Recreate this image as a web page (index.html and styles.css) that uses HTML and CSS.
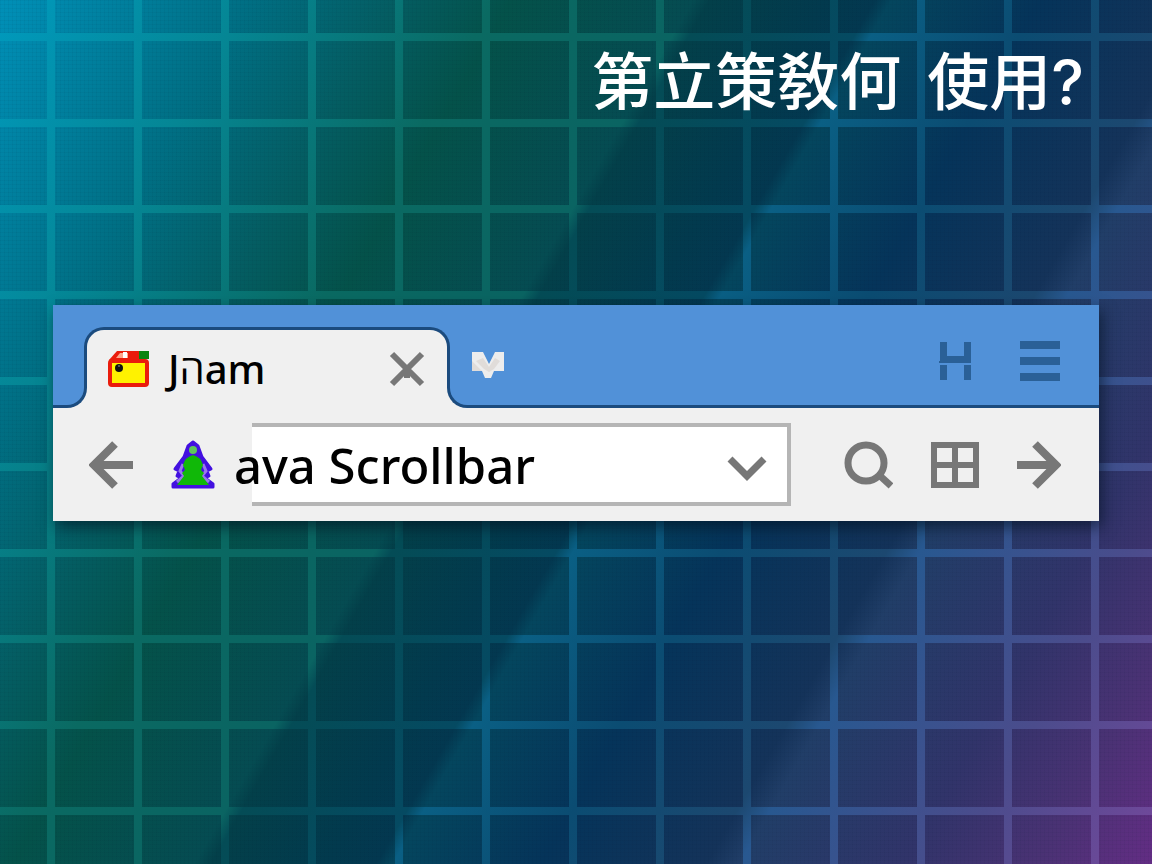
FILE: index.html
```html
<!DOCTYPE html>
<html lang="zh">
<head>
    <meta charset="UTF-8">
    <meta name="viewport" content="width=device-width, initial-scale=1.0">
    <title>Java Scrollbar</title>
    <link rel="stylesheet" href="styles.css">
</head>
<body>
    <h1 class="title"><span>第立策敎何</span> <span>使用?</span></h1>

    <main class="browser">
        <header class="tab-strip">
            <div class="tab">
                <svg class="favicon" width="42" height="38" viewBox="0 0 42 38" aria-hidden="true">
                    <path d="M1 10 9 1H34V11H1z" fill="#ea1c0c"/>
                    <path d="M8 8 12 3H20V8z" fill="#ffa58c"/>
                    <path d="M15 2h4v6h-4z" fill="#fff"/>
                    <path d="M31 1h10v8H31z" fill="#0a8410"/>
                    <rect x="2" y="11" width="37" height="24" rx="2" fill="#fff200" stroke="#ea1c0c" stroke-width="4"/>
                    <circle cx="11" cy="18" r="4" fill="#111"/>
                    <circle cx="11" cy="16" r="1" fill="#667"/>
                </svg>
                <span class="tab-name">Jהam</span>
                <button class="icon-btn close" aria-label="Close tab">
                    <svg width="36" height="36" viewBox="0 0 36 36">
                        <path d="M3 3 33 33M33 3 3 33M18 19v8" fill="none" stroke="#777" stroke-width="6" stroke-linejoin="round"/>
                    </svg>
                </button>
            </div>
            <div class="strip-rest">
                <button class="icon-btn new-tab" aria-label="New tab">
                    <svg width="32" height="28" viewBox="0 0 32 28">
                        <path d="M0 1H11L17 13 23 1H32V20H22L19 27H13L10 20H0z" fill="#ededed"/>
                        <path d="M0 10 10 20H0zM4 10l7-3 6 9 6-9 5 3-6 8-5 3-5-3z" fill="#e0dcd9"/>
                    </svg>
                </button>
                <button class="icon-btn bookmark" aria-label="Bookmarks">
                    <svg width="34" height="38" viewBox="0 0 34 38">
                        <path d="M1 0h7v14h17V0h7v21H0v-2h1zM1 23h7v15H1zM25 23h7v15h-7z" fill="#2a6097"/>
                    </svg>
                </button>
                <button class="icon-btn" aria-label="Menu">
                    <svg width="42" height="40" viewBox="0 0 42 40">
                        <path d="M1 0H41V8H1zM1 16H41V24H1zM1 32H41V40H1z" fill="#2a6097"/>
                    </svg>
                </button>
            </div>
        </header>

        <form class="toolbar">
            <button type="button" class="icon-btn" aria-label="Back">
                <svg width="44" height="48" viewBox="0 0 44 48">
                    <path d="M44 24H5M26 3 5 24 26 45" fill="none" stroke="#777" stroke-width="8"/>
                </svg>
            </button>
            <svg class="site-icon" width="44" height="50" viewBox="0 0 44 50" aria-hidden="true">
                <path d="M22 2 17 6 13 17 4 29 8 31 6 36 10 38 2 44V47H42V44L34 38 38 36 36 31 40 29 31 17 27 6z" fill="#4310e0" stroke="#4310e0" stroke-width="3" stroke-linejoin="round"/>
                <path d="M12 24 9 31 13 36 6 42M32 24 35 31 31 36 38 42" fill="none" stroke="#9a78ec" stroke-width="3"/>
                <path d="M22 15Q14 17 12 25L14 30 11 33 13 36 6 45H38L31 36 33 33 30 30 32 25Q30 17 22 15z" fill="#10b808"/>
                <circle cx="22" cy="10" r="4" fill="#5fc75a"/>
            </svg>
            <div class="address">
                <input type="text" value="ava Scrollbar" aria-label="Address">
                <button type="button" class="icon-btn history" aria-label="Show history">
                    <svg width="40" height="26" viewBox="0 0 40 26">
                        <path d="M3 3 20 20 37 3" fill="none" stroke="#777" stroke-width="7"/>
                    </svg>
                </button>
            </div>
            <div class="actions">
                <button type="button" class="icon-btn" aria-label="Search">
                    <svg width="50" height="48" viewBox="0 0 50 48">
                        <circle cx="23" cy="22" r="18" fill="none" stroke="#777" stroke-width="7"/>
                        <path d="M35 33 48 45" stroke="#777" stroke-width="7"/>
                    </svg>
                </button>
                <button type="button" class="icon-btn" aria-label="Apps">
                    <svg width="48" height="46" viewBox="0 0 48 46">
                        <path d="M3 3H45V43H3zM24 3V43M3 23H45" fill="none" stroke="#777" stroke-width="6"/>
                    </svg>
                </button>
                <button type="button" class="icon-btn" aria-label="Forward">
                    <svg width="44" height="48" viewBox="0 0 44 48">
                        <path d="M0 24H39M18 3 39 24 18 45" fill="none" stroke="#777" stroke-width="8"/>
                    </svg>
                </button>
            </div>
        </form>
    </main>
</body>
</html>
```
FILE: styles.css
```css
*,
*::before {
    box-sizing: border-box;
}
body {
    font-family: "Noto Sans", "Open Sans", "Noto Sans CJK SC", sans-serif;
    margin: 0;
    min-height: 100vh;
    position: relative;
    z-index: 0;
    background:
        repeating-linear-gradient(90deg, rgba(0, 20, 40, 0.04) 0 1px, transparent 1px 4px),
        repeating-linear-gradient(rgba(0, 20, 40, 0.04) 0 1px, transparent 1px 4px),
        linear-gradient(120deg, #0090b8 0%, #006f84 15%, #045d62 24%, #04524a 31%, #054c52 42%, #03404a 43%, #023a4e 50%, #033850 53%, #04465e 54%, #05345a 63%, #14335a 73%, #213e68 75%, #31346a 85%, #4a3274 93%, #632d84 100%);
}
/* grid lines, with their own colours along the gradient */
body::before {
    content: "";
    position: absolute;
    inset: 0;
    z-index: -1;
    background: linear-gradient(120deg, #009abe 0%, #058694 15%, #0a6a62 30%, #0a6462 42%, #044c56 43%, #054a62 53%, #0a5f84 54%, #0b4c72 63%, #1c4870 73%, #285890 75%, #4b4c8c 88%, #74489c 100%);
    mask:
        linear-gradient(90deg, #000 8px, transparent 8px) 47px 0 / 87px 86px,
        linear-gradient(#000 8px, transparent 8px) 0 33px / 87px 86px;
}
.title {
    display: flex;
    justify-content: flex-end;
    gap: 26px;
    margin: 0;
    padding: 38px 68px 0 24px;
    color: #fff;
    font-family: "Inter", "Noto Sans CJK SC", sans-serif;
    font-size: 62px;
    font-weight: 500;
    line-height: 90px;
}
.browser {
    margin: 177px 53px 0;
    background: #f0f0f0;
    box-shadow: 3px 6px 14px rgba(0, 15, 30, 0.6);
}
.tab-strip {
    display: flex;
    height: 103px;
    padding-left: 32px;
    position: relative;
    background: linear-gradient(#5191d8 62px, #f0f0f0 62px);
}
.icon-btn {
    display: flex;
    flex: none;
    padding: 0;
    border: none;
    background: none;
    cursor: pointer;
}
/* the strip curves up into the tab on both sides */
.tab-strip::before,
.strip-rest::before {
    content: "";
    position: absolute;
    left: 0;
    bottom: 0;
    height: 42px;
    background: #5191d8;
    border-bottom: 3px solid #1b4b7e;
}
.tab-strip::before {
    width: 34px;
    border-right: 3px solid #1b4b7e;
    border-bottom-right-radius: 20px;
}
.strip-rest::before {
    right: 0;
    border-left: 3px solid #1b4b7e;
    border-bottom-left-radius: 20px;
}
.tab {
    display: flex;
    align-items: center;
    gap: 18px;
    width: 364px;
    margin-top: 22px;
    padding: 2px 24px 0 23px;
    position: relative;
}
.tab::before {
    content: "";
    position: absolute;
    left: -1px;
    right: -1px;
    top: 0;
    height: 40px;
    background: #f0f0f0;
    border: 3px solid #1b4b7e;
    border-bottom: none;
    border-radius: 20px 20px 0 0;
}
.tab > * {
    position: relative;
}
.tab-name {
    flex: 1;
    font-size: 40px;
    font-weight: 500;
    line-height: 48px;
    color: #000;
}
.strip-rest {
    display: flex;
    align-items: center;
    flex: 1;
    gap: 46px;
    margin-left: -2px;
    padding: 8px 38px 0 25px;
    position: relative;
}
.strip-rest .icon-btn {
    position: relative;
}
.new-tab {
    margin-top: 8px;
}
.bookmark {
    margin-left: auto;
}
.toolbar {
    display: flex;
    align-items: center;
    padding: 15px 38px 15px 36px;
}
.site-icon {
    flex: none;
    margin: 0 37px 0 38px;
}
.address {
    display: flex;
    align-items: center;
    flex: 1;
    min-width: 0;
    height: 83px;
    padding-right: 20px;
    background: #fff;
    border: 4px solid #b5b5b5;
    border-left: none;
}
.address input {
    flex: 1;
    min-width: 0;
    margin-left: -18px;
    padding: 0;
    border: none;
    outline: none;
    background: none;
    color: #000;
    font-family: inherit;
    font-size: 49px;
    font-weight: 500;
    line-height: 66px;
}
.history {
    margin-top: 8px;
}
.actions {
    display: flex;
    align-items: center;
    gap: 38px;
    margin-left: 52px;
}
```
